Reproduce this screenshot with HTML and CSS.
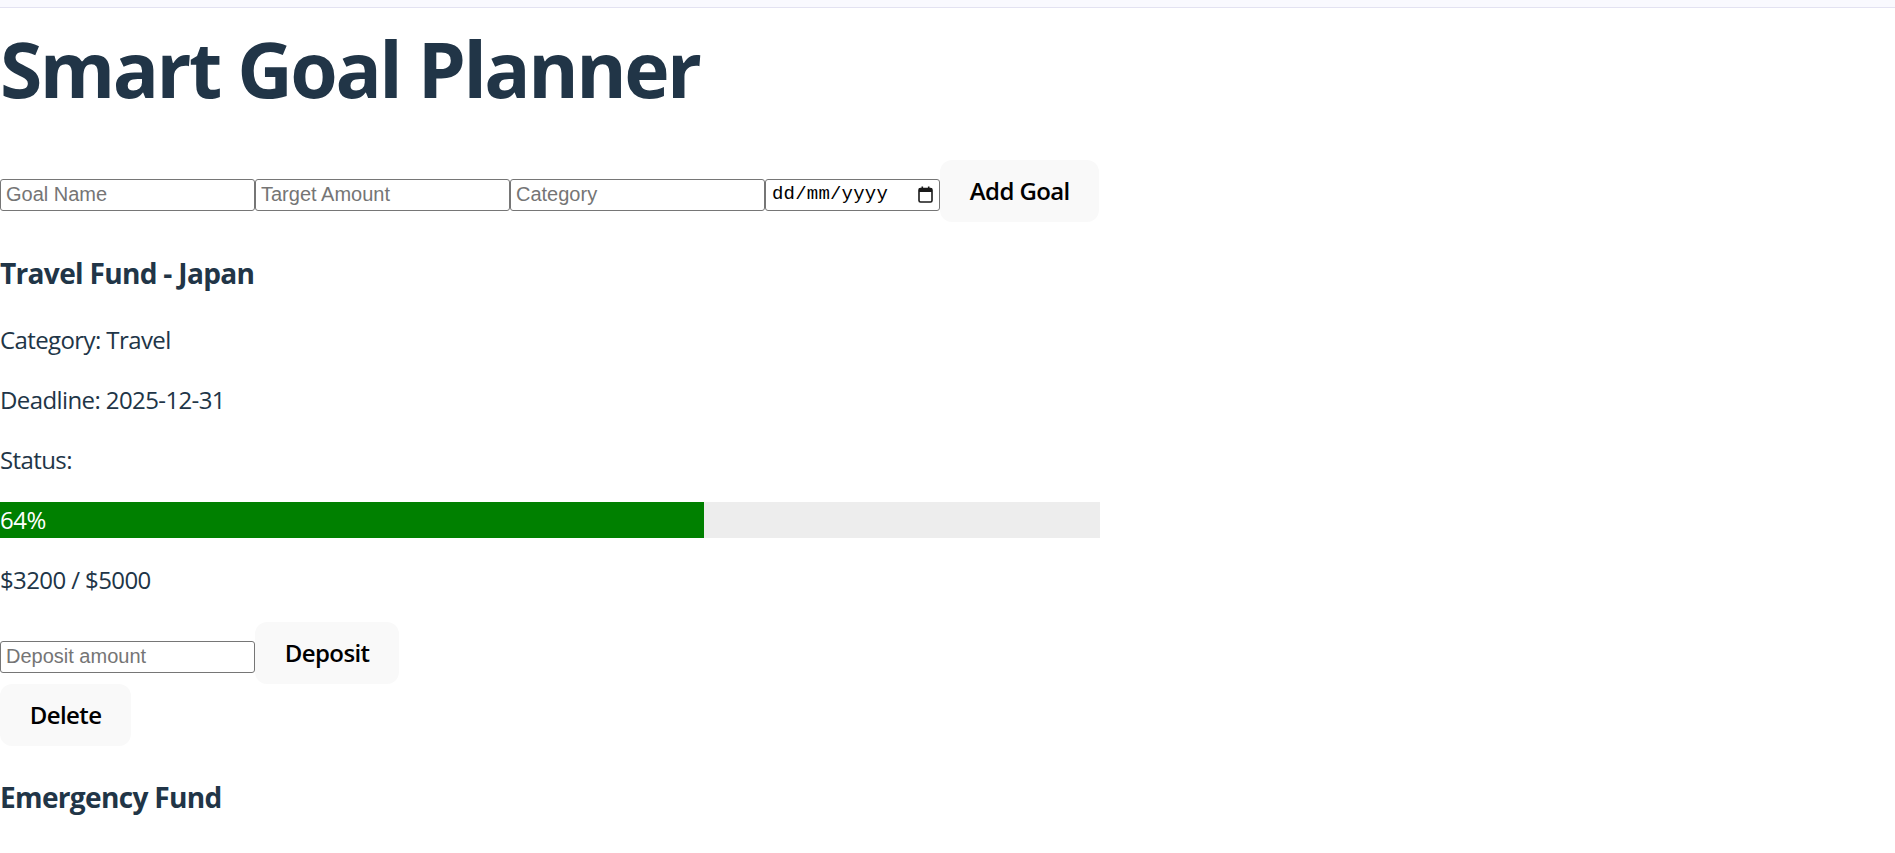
FILE: index.html
```html
<!DOCTYPE html>
<html lang="en">
<head>
<meta charset="utf-8">
<title>Smart Goal Planner</title>
<link rel="stylesheet" href="styles.css">
</head>
<body>
<div class="topbar"></div>
<div class="app">
  <h1 class="title">Smart Goal Planner</h1>
  <form class="goal-form">
    <input class="field" type="text" placeholder="Goal Name">
    <input class="field" type="number" placeholder="Target Amount">
    <input class="field" type="text" placeholder="Category">
    <div class="date-field">
      <span class="date-text">dd/mm/yyyy</span>
      <svg class="cal-icon" width="15" height="17" viewBox="0 0 15 17" aria-hidden="true">
        <rect x="1" y="2.5" width="13" height="13.5" rx="1.5" fill="none" stroke="#1a1a1a" stroke-width="1.6"/>
        <rect x="1" y="2.5" width="13" height="3.5" fill="#1a1a1a"/>
        <rect x="3.5" y="0.5" width="1.6" height="3" fill="#1a1a1a"/>
        <rect x="9.9" y="0.5" width="1.6" height="3" fill="#1a1a1a"/>
      </svg>
    </div>
    <button class="btn" type="button">Add Goal</button>
  </form>

  <div class="goal">
    <h3 class="goal-name">Travel Fund - Japan</h3>
    <p class="line">Category: Travel</p>
    <p class="line">Deadline: 2025-12-31</p>
    <p class="line">Status: </p>
    <div class="progress"><div class="progress-fill" style="width:64%">64%</div></div>
    <p class="line">$3200 / $5000</p>
    <div class="deposit-row">
      <input class="field" type="number" placeholder="Deposit amount">
      <button class="btn" type="button">Deposit</button>
    </div>
    <div class="actions"><button class="btn" type="button">Delete</button></div>
  </div>

  <div class="goal">
    <h3 class="goal-name">Emergency Fund</h3>
  </div>
</div>
</body>
</html>
```
FILE: styles.css
```css
html, body {
  margin: 0;
  padding: 0;
  background: #ffffff;
}

body {
  font-family: "Open Sans", "Noto Sans", sans-serif;
  font-size: 24px;
  line-height: 1.5;
  color: #213547;
}

.topbar {
  height: 7px;
  background: #f9f9fe;
  border-bottom: 1px solid #e3e2f1;
}

.app {
  width: 1100px;
}

.title {
  font-size: 76.8px;
  line-height: 84.5px;
  font-weight: 700;
  margin: 19px 0 48px;
  letter-spacing: -2.5px;
}

.goal-form,
.deposit-row {
  display: flex;
  align-items: flex-start;
}

.field {
  flex: none;
  box-sizing: border-box;
  width: 255px;
  height: 32px;
  margin: 19px 0 0;
  padding: 0 5px;
  border: 1px solid #767676;
  border-radius: 3px;
  font-family: "Liberation Sans", Arial, sans-serif;
  font-size: 20px;
  color: #000;
  background: #fff;
  -moz-appearance: textfield;
}

.field::-webkit-outer-spin-button,
.field::-webkit-inner-spin-button {
  -webkit-appearance: none;
  margin: 0;
}

.field::placeholder {
  color: #757575;
}

.date-field {
  flex: none;
  box-sizing: border-box;
  width: 175px;
  height: 32px;
  margin-top: 19px;
  padding: 0 6px 0 6px;
  border: 1px solid #767676;
  border-radius: 3px;
  display: flex;
  align-items: center;
  justify-content: space-between;
  font-family: "Liberation Mono", "DejaVu Sans Mono", monospace;
  font-size: 19px;
  letter-spacing: 0.2px;
  color: #000;
}

.cal-icon {
  flex: none;
}

.btn {
  flex: none;
  box-sizing: border-box;
  height: 62px;
  padding: 14px 28.8px;
  border: 1px solid transparent;
  border-radius: 12px;
  background: #f9f9f9;
  color: #000;
  font-family: "Open Sans", "Noto Sans", sans-serif;
  font-size: 24px;
  font-weight: 600;
  line-height: 32px;
  letter-spacing: -0.6px;
  white-space: nowrap;
  cursor: pointer;
}

.goal-name {
  font-size: 28.08px;
  line-height: 42px;
  font-weight: 700;
  margin: 30px 0 28px;
  letter-spacing: -0.7px;
}

.line {
  margin: 24px 0;
  letter-spacing: -0.6px;
}

.progress {
  width: 100%;
  background: #ededed;
}

.progress-fill {
  background: #008000;
  color: #ffffff;
  line-height: 36px;
  letter-spacing: -0.5px;
  white-space: nowrap;
}

.deposit-row {
  margin-top: 24px;
}

.actions {
  display: flex;
}
```
